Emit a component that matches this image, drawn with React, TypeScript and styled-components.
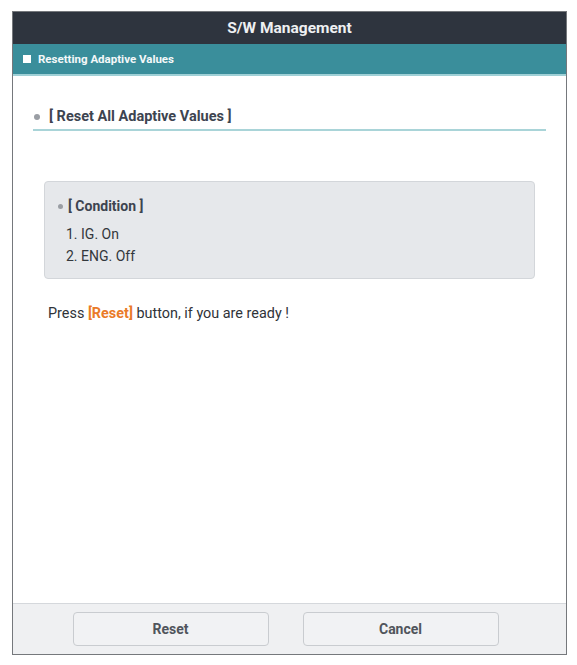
import styled, { createGlobalStyle } from "styled-components";

const GlobalStyle = createGlobalStyle`
  html, body {
    margin: 0;
    padding: 0;
    background: #ffffff;
    font-family: Roboto, "Liberation Sans", Arial, sans-serif;
  }
`;

const Frame = styled.div`
  box-sizing: border-box;
  margin: 11px 0 0 12px;
  width: 555px;
  height: 644px;
  border: 1.5px solid #75787c;
  display: flex;
  flex-direction: column;
  background: #ffffff;
`;

const TitleBar = styled.div`
  height: 32px;
  background: #2e343e;
  color: #eef0f2;
  font-size: 15.5px;
  font-weight: 700;
  display: flex;
  align-items: center;
  justify-content: center;
`;

const SubBar = styled.div`
  height: 30px;
  background: #3a8e9b;
  border-bottom: 2px solid #9fd0d6;
  color: #f4f8f9;
  font-size: 11.5px;
  font-weight: 700;
  display: flex;
  align-items: center;
  gap: 7px;
  padding-left: 10px;
`;

const Square = styled.span`
  width: 8px;
  height: 8px;
  background: #ffffff;
`;

const Body = styled.div`
  flex: 1;
  padding: 32px 20px 0 20px;
  display: flex;
  flex-direction: column;
`;

const Heading = styled.div`
  display: flex;
  align-items: center;
  gap: 9px;
  padding: 0 0 3px 1px;
  border-bottom: 2px solid #a9d4d8;
  color: #3d4450;
  font-size: 14.5px;
  font-weight: 700;
  line-height: 18px;
`;

const Dot = styled.span<{ size?: number }>`
  width: ${(p) => p.size ?? 6}px;
  height: ${(p) => p.size ?? 6}px;
  border-radius: 50%;
  background: #9a9ea4;
  flex: none;
`;

const ConditionBox = styled.div`
  margin: 50px 11px 0 11px;
  height: 98px;
  box-sizing: border-box;
  background: #e6e8eb;
  border: 1.5px solid #d3d6da;
  border-radius: 4px;
  padding: 15px 0 0 0;
  display: flex;
  flex-direction: column;
`;

const ConditionTitle = styled.div`
  display: flex;
  align-items: center;
  gap: 5px;
  padding-left: 13px;
  color: #3d4450;
  font-size: 14px;
  font-weight: 700;
  line-height: 18px;
  margin-bottom: 8px;
`;

const Item = styled.div`
  padding-left: 21px;
  color: #33373c;
  font-size: 14px;
  line-height: 22px;
`;

const Notice = styled.div`
  margin: 26px 0 0 15px;
  color: #2f3338;
  font-size: 14.4px;
  line-height: 18px;
`;

const Accent = styled.span`
  color: #ea7b28;
  font-weight: 700;
`;

const Footer = styled.div`
  height: 51px;
  box-sizing: border-box;
  border-top: 1.5px solid #d5d8dc;
  background: #eff0f2;
  display: flex;
  justify-content: center;
  align-items: flex-start;
  gap: 34px;
  padding: 8px 8px 0 0;
`;

const Button = styled.button`
  width: 196px;
  height: 34px;
  box-sizing: border-box;
  background: #f1f2f4;
  border: 1.5px solid #c9ccd0;
  border-radius: 4px;
  color: #50555c;
  font-family: Roboto, "Liberation Sans", Arial, sans-serif;
  font-size: 14px;
  font-weight: 700;
  cursor: pointer;
`;

export default function App() {
  return (
    <>
      <GlobalStyle />
      <Frame>
        <TitleBar>S/W Management</TitleBar>
        <SubBar>
          <Square />
          Resetting Adaptive Values
        </SubBar>
        <Body>
          <Heading>
            <Dot />[ Reset All Adaptive Values ]
          </Heading>
          <ConditionBox>
            <ConditionTitle>
              <Dot size={5} />[ Condition ]
            </ConditionTitle>
            <Item>1. IG. On</Item>
            <Item>2. ENG. Off</Item>
          </ConditionBox>
          <Notice>
            Press <Accent>[Reset]</Accent> button, if you are ready !
          </Notice>
        </Body>
        <Footer>
          <Button>Reset</Button>
          <Button>Cancel</Button>
        </Footer>
      </Frame>
    </>
  );
}
